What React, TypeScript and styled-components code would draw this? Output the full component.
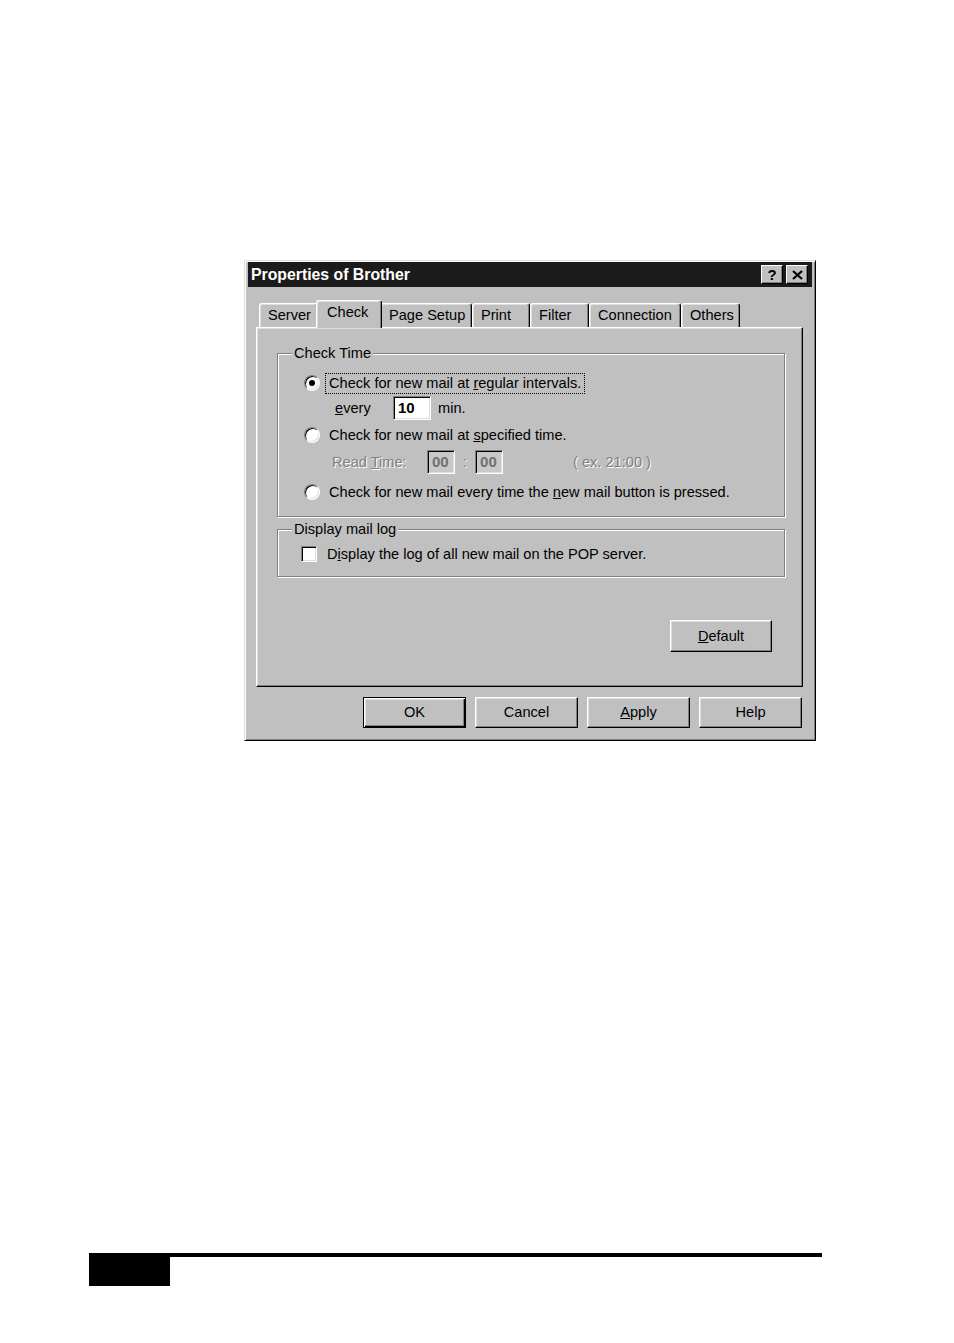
import React from "react";
import styled, { createGlobalStyle } from "styled-components";

const GlobalStyle = createGlobalStyle`
  html, body {
    margin: 0;
    padding: 0;
    background: #fff;
  }
  body {
    font-family: "Liberation Sans", Arial, sans-serif;
  }
`;

const Page = styled.div`
  width: 954px;
  height: 1343px;
  background: #fff;
  overflow: hidden;
  display: flex;
  flex-direction: column;
`;

const Dialog = styled.div`
  box-sizing: border-box;
  width: 572px;
  height: 481px;
  margin: 260px 0 0 244px;
  padding: 1px 3px;
  background: #c0c0c0;
  border: 1px solid;
  border-color: #dfdfdf #000 #000 #dfdfdf;
  box-shadow: inset 1px 1px #fff, inset -1px -1px #808080;
  display: flex;
  flex-direction: column;
  font-size: 14.6px;
  color: #000;
`;

const TitleBar = styled.div`
  height: 25px;
  background: #1b1b1b;
  display: flex;
  align-items: center;
  padding: 0 4px 0 3px;
`;

const Title = styled.div`
  flex: 1;
  color: #fff;
  font-weight: bold;
  font-size: 15.8px;
`;

const CaptionButton = styled.div<{ $gap?: number }>`
  box-sizing: border-box;
  width: 22px;
  height: 19px;
  margin-left: ${(p) => p.$gap ?? 0}px;
  background: #c0c0c0;
  border: 1px solid;
  border-color: #fff #000 #000 #fff;
  box-shadow: inset -1px -1px #808080;
  display: flex;
  align-items: center;
  justify-content: center;
  font-weight: bold;
  font-size: 15px;
  color: #000;
`;

const Body = styled.div`
  display: flex;
  flex-direction: column;
  padding: 0 9px 0 8px;
`;

const TabRow = styled.div`
  display: flex;
  align-items: flex-end;
  height: 27px;
  margin-top: 13px;
  padding-left: 3px;
`;

const Tab = styled.div<{ $w: number; $active?: boolean }>`
  box-sizing: border-box;
  position: relative;
  z-index: ${(p) => (p.$active ? 2 : 1)};
  width: ${(p) => p.$w}px;
  height: ${(p) => (p.$active ? 28 : 24)}px;
  margin: 0 ${(p) => (p.$active ? -2 : 0)}px ${(p) => (p.$active ? -1 : 0)}px;
  padding: ${(p) => (p.$active ? "2px 0 0 10px" : "2px 0 0 8px")};
  background: #c0c0c0;
  border: 1px solid;
  border-bottom: none;
  border-color: #fff #000 #000 #fff;
  border-radius: 3px 3px 0 0;
  box-shadow: inset -1px 0 #808080, inset 1px 1px #dfdfdf;
  line-height: 19px;
  white-space: nowrap;
`;

const Panel = styled.div`
  box-sizing: border-box;
  height: 360px;
  padding: 17px 17px 0 20px;
  border: 1px solid;
  border-color: #fff #000 #000 #fff;
  box-shadow: inset -1px -1px #808080, inset 1px 1px #dfdfdf;
  display: flex;
  flex-direction: column;
`;

const Group = styled.fieldset<{ $mt?: number }>`
  margin: ${(p) => p.$mt ?? 0}px 0 0;
  padding: 0;
  min-width: 0;
  border: 1px solid #808080;
  box-shadow: 1px 1px 0 #fff, inset 1px 1px 0 #fff;
`;

const Legend = styled.legend`
  margin-left: 14px;
  padding: 0 2px;
  line-height: 16px;
  background: #c0c0c0;
`;

const GroupInner = styled.div<{ $pt: number; $pb: number; $pl: number }>`
  display: flex;
  flex-direction: column;
  padding: ${(p) => p.$pt}px 0 ${(p) => p.$pb}px ${(p) => p.$pl}px;
`;

const Row = styled.div<{ $mt?: number; $indent?: number }>`
  display: flex;
  align-items: center;
  height: 24px;
  margin-top: ${(p) => p.$mt ?? 0}px;
  padding-left: ${(p) => p.$indent ?? 0}px;
  white-space: nowrap;
`;

const Radio = styled.span<{ $checked?: boolean }>`
  box-sizing: border-box;
  position: relative;
  flex: none;
  width: 16px;
  height: 16px;
  border-radius: 50%;
  background: #fff;
  border: 1px solid;
  border-color: #808080 #fff #fff #808080;
  box-shadow: inset 1px 1px #000, inset -1px -1px #dfdfdf;

  &::after {
    content: "";
    display: ${(p) => (p.$checked ? "block" : "none")};
    position: absolute;
    left: 4px;
    top: 4px;
    width: 6px;
    height: 6px;
    border-radius: 50%;
    background: #000;
  }
`;

const Check = styled.span`
  box-sizing: border-box;
  flex: none;
  width: 16px;
  height: 16px;
  background: #fff;
  border: 1px solid;
  border-color: #808080 #fff #fff #808080;
  box-shadow: inset 1px 1px #000, inset -1px -1px #dfdfdf;
`;

const OptionText = styled.span<{ $focused?: boolean; $ml?: number }>`
  margin-left: ${(p) => p.$ml ?? 5}px;
  padding: 1px 3px 1px 3px;
  border: 1px dotted ${(p) => (p.$focused ? "#000" : "transparent")};
  line-height: 17px;
`;

const FieldLabel = styled.span<{ $w: number; $disabled?: boolean }>`
  width: ${(p) => p.$w}px;
  flex: none;
  color: ${(p) => (p.$disabled ? "#808080" : "#000")};
  text-shadow: ${(p) => (p.$disabled ? "1px 1px 0 #fff" : "none")};
`;

const TextBox = styled.div<{ $w: number; $disabled?: boolean }>`
  box-sizing: border-box;
  width: ${(p) => p.$w}px;
  height: 24px;
  padding: 0 0 0 4px;
  flex: none;
  background: ${(p) => (p.$disabled ? "#c8c8c8" : "#fff")};
  border: 1px solid;
  border-color: #808080 #fff #fff #808080;
  box-shadow: inset 1px 1px #000, inset -1px -1px #dfdfdf;
  font-weight: bold;
  font-size: 15px;
  line-height: 22px;
  color: ${(p) => (p.$disabled ? "#707070" : "#000")};
`;

const Plain = styled.span<{ $ml?: number; $mr?: number; $disabled?: boolean }>`
  margin-left: ${(p) => p.$ml ?? 0}px;
  margin-right: ${(p) => p.$mr ?? 0}px;
  color: ${(p) => (p.$disabled ? "#808080" : "#000")};
  text-shadow: ${(p) => (p.$disabled ? "1px 1px 0 #fff" : "none")};
`;

const Button = styled.div<{ $isDefault?: boolean; $w?: number }>`
  box-sizing: border-box;
  width: ${(p) => p.$w ?? 103}px;
  height: 31px;
  background: #c0c0c0;
  border: 1px solid;
  border-color: ${(p) => (p.$isDefault ? "#000" : "#fff #000 #000 #fff")};
  box-shadow: ${(p) =>
    p.$isDefault
      ? "inset 1px 1px #fff, inset -1px -1px #000, inset -2px -2px #808080, inset 2px 2px #dfdfdf"
      : "inset -1px -1px #808080, inset 1px 1px #dfdfdf"};
  display: flex;
  align-items: center;
  justify-content: center;
  padding-bottom: 1px;
`;

const DefaultButton = styled(Button)`
  align-self: flex-end;
  height: 32px;
  margin: 43px 13px 0 0;
`;

const ButtonRow = styled.div`
  display: flex;
  justify-content: flex-end;
  gap: 9px;
  margin: 10px 1px 0 0;
`;

const Footer = styled.div`
  display: flex;
  align-items: flex-start;
  width: 733px;
  margin: 512px 0 0 89px;
`;

const FooterBlock = styled.div`
  width: 81px;
  height: 33px;
  background: #000;
`;

const FooterRule = styled.div`
  flex: 1;
  height: 4px;
  background: #000;
`;

const CloseIcon = () => (
  <svg width="11" height="10" viewBox="0 0 11 10">
    <path d="M1 1 L10 9 M10 1 L1 9" stroke="#000" strokeWidth="2.2" />
  </svg>
);

const tabs = [
  { label: "Server", w: 59 },
  { label: "Check", w: 66, active: true },
  { label: "Page Setup", w: 92 },
  { label: "Print", w: 58 },
  { label: "Filter", w: 59 },
  { label: "Connection", w: 92 },
  { label: "Others", w: 59 },
];

export default function App() {
  return (
    <Page>
      <GlobalStyle />
      <Dialog>
        <TitleBar>
          <Title>Properties of Brother</Title>
          <CaptionButton>?</CaptionButton>
          <CaptionButton $gap={3}>
            <CloseIcon />
          </CaptionButton>
        </TitleBar>
        <Body>
          <TabRow>
            {tabs.map((t) => (
              <Tab key={t.label} $w={t.w} $active={t.active}>
                {t.label}
              </Tab>
            ))}
          </TabRow>
          <Panel>
            <Group>
              <Legend>Check Time</Legend>
              <GroupInner $pt={10} $pb={12} $pl={26}>
                <Row>
                  <Radio $checked />
                  <OptionText $focused>
                    Check for new mail at <u>r</u>egular intervals.
                  </OptionText>
                </Row>
                <Row $mt={1} $indent={31}>
                  <FieldLabel $w={58}>
                    <u>e</u>very
                  </FieldLabel>
                  <TextBox $w={38}>10</TextBox>
                  <Plain $ml={7}>min.</Plain>
                </Row>
                <Row $mt={3}>
                  <Radio />
                  <OptionText>
                    Check for new mail at <u>s</u>pecified time.
                  </OptionText>
                </Row>
                <Row $mt={3} $indent={28}>
                  <FieldLabel $w={95} $disabled>
                    Read <u>T</u>ime:
                  </FieldLabel>
                  <TextBox $w={28} $disabled>
                    00
                  </TextBox>
                  <Plain $ml={8} $mr={8} $disabled>
                    :
                  </Plain>
                  <TextBox $w={28} $disabled>
                    00
                  </TextBox>
                  <Plain $ml={70} $disabled>
                    ( ex. 21:00 )
                  </Plain>
                </Row>
                <Row $mt={6}>
                  <Radio />
                  <OptionText>
                    Check for new mail every time the <u>n</u>ew mail button is pressed.
                  </OptionText>
                </Row>
              </GroupInner>
            </Group>
            <Group $mt={4}>
              <Legend>Display mail log</Legend>
              <GroupInner $pt={5} $pb={10} $pl={23}>
                <Row>
                  <Check />
                  <OptionText $ml={6}>
                    D<u>i</u>splay the log of all new mail on the POP server.
                  </OptionText>
                </Row>
              </GroupInner>
            </Group>
            <DefaultButton $w={102}>
              <span>
                <u>D</u>efault
              </span>
            </DefaultButton>
          </Panel>
          <ButtonRow>
            <Button $isDefault>OK</Button>
            <Button>Cancel</Button>
            <Button>
              <span>
                <u>A</u>pply
              </span>
            </Button>
            <Button>Help</Button>
          </ButtonRow>
        </Body>
      </Dialog>
      <Footer>
        <FooterBlock />
        <FooterRule />
      </Footer>
    </Page>
  );
}
